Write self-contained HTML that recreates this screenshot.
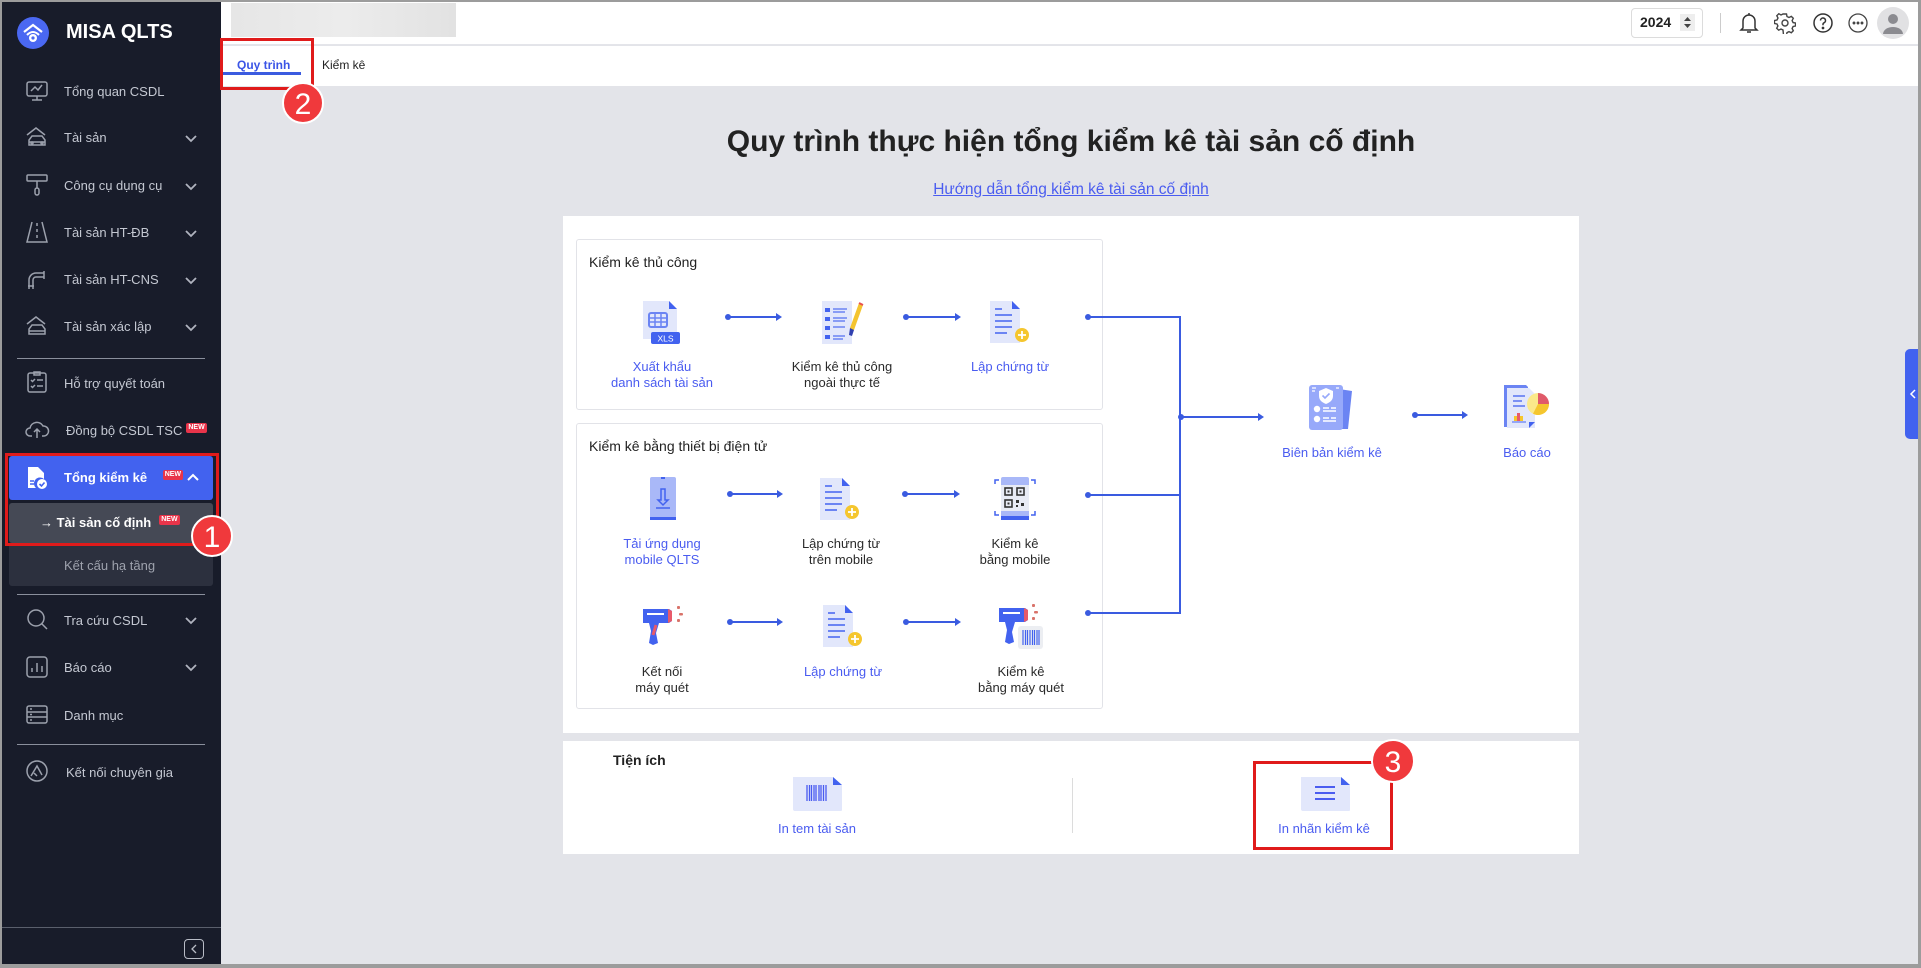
<!DOCTYPE html>
<html><head><meta charset="utf-8">
<style>
*{margin:0;padding:0;box-sizing:border-box}
body{width:1921px;height:968px;position:relative;overflow:hidden;background:#e3e4e9;font-family:"Liberation Sans","Noto Sans CJK SC",sans-serif}
.a{position:absolute}
#frame{position:absolute;inset:0;border:2px solid #9c9c9c;border-right-width:3px;border-bottom-width:4px;pointer-events:none;z-index:50}
#side{left:0;top:0;width:221px;height:968px;background:#181c2a}
.mi{position:absolute;left:64px;font-size:13px;color:#c4c8d2;white-space:nowrap}
.ic{position:absolute;left:24px;width:26px;height:26px}
.chev{position:absolute;left:184px;width:14px;height:14px}
.div{position:absolute;left:17px;width:188px;height:1px;background:#8a8f9c}
.new{display:inline-block;background:#e8344a;color:#fff;font-size:7px;font-weight:bold;padding:1px 2px;border-radius:2px;vertical-align:top;margin-left:4px;line-height:8px}
.lbl{position:absolute;font-size:13px;text-align:center;line-height:16px;white-space:nowrap;transform:translateX(-50%)}
.blue{color:#4a5cf0}.dark{color:#2a2a2a}
.arr{position:absolute;height:2px;background:#3a5be0}
.arr:before{content:"";position:absolute;left:-3px;top:-2px;width:6px;height:6px;border-radius:50%;background:#3a5be0}
.arr:after{content:"";position:absolute;right:-2px;top:-3px;border-left:6px solid #3a5be0;border-top:4px solid transparent;border-bottom:4px solid transparent}
.dot{position:absolute;height:2px;background:#3a5be0}
.dot:before{content:"";position:absolute;left:-3px;top:-2px;width:6px;height:6px;border-radius:50%;background:#3a5be0}
.circ{position:absolute;width:42px;height:42px;border-radius:50%;background:#f0393c;color:#fff;font-size:30px;text-align:center;line-height:42px;border:2px solid #fff;z-index:20}
.rbox{position:absolute;border:3px solid #e01b1b;z-index:19}
.card{position:absolute;border:1px solid #e2e3e8;border-radius:3px;background:#fff}
.ct{position:absolute;font-size:14px;color:#222;font-weight:500}
</style></head><body>
<div id="frame"></div>

<div id="side" class="a">
 <svg class="a" style="left:16px;top:16px" width="34" height="34" viewBox="0 0 34 34"><circle cx="17" cy="17" r="16" fill="#4a68f2"/><path d="M8 16 L17 9 L26 16" stroke="#fff" stroke-width="2.2" fill="none"/><path d="M11 19 Q17 13 23 19" stroke="#fff" stroke-width="2" fill="none"/><circle cx="17" cy="22" r="4" fill="#fff"/><circle cx="17" cy="22" r="1.6" fill="#4a68f2"/></svg>
 <div class="a" style="left:66px;top:21px;font-size:20px;font-weight:bold;color:#fff">MISA QLTS</div>

 <svg class="ic" style="top:78px" viewBox="0 0 26 26" fill="none" stroke="#9ca1ad" stroke-width="1.5"><rect x="3" y="4" width="20" height="14" rx="2"/><path d="M7 13l4-4 3 3 4-5M13 18v4M8 22h10"/></svg>
 <div class="mi" style="top:84px">Tổng quan CSDL</div>
 <svg class="ic" style="top:124px" viewBox="0 0 26 26" fill="none" stroke="#9ca1ad" stroke-width="1.5"><path d="M3 11l9-7 9 7M5 21v-5l3-4h10l3 4v5zM5 18h16"/><circle cx="8" cy="19" r="1"/><circle cx="18" cy="19" r="1"/></svg>
 <div class="mi" style="top:130px">Tài sản</div>
 <svg class="ic" style="top:172px" viewBox="0 0 26 26" fill="none" stroke="#9ca1ad" stroke-width="1.5"><rect x="3" y="3" width="20" height="6" rx="1"/><path d="M13 9v4M13 13v3"/><rect x="11" y="16" width="4" height="7" rx="2"/></svg>
 <div class="mi" style="top:178px">Công cụ dụng cụ</div>
 <svg class="ic" style="top:219px" viewBox="0 0 26 26" fill="none" stroke="#9ca1ad" stroke-width="1.5"><path d="M8 3L3 23h20L18 3M13 4v3M13 10v3M13 16v3"/></svg>
 <div class="mi" style="top:225px">Tài sản HT-ĐB</div>
 <svg class="ic" style="top:266px" viewBox="0 0 26 26" fill="none" stroke="#9ca1ad" stroke-width="1.5"><path d="M5 23v-9a7 7 0 0 1 7-7h8M9 23v-9a3 3 0 0 1 3-3h8M20 5v8M4 20h6"/></svg>
 <div class="mi" style="top:272px">Tài sản HT-CNS</div>
 <svg class="ic" style="top:313px" viewBox="0 0 26 26" fill="none" stroke="#9ca1ad" stroke-width="1.5"><path d="M3 11l9-7 9 7M5 21v-5l3-4h10l3 4v5zM5 18h16"/></svg>
 <div class="mi" style="top:319px">Tài sản xác lập</div>
 <svg class="chev" style="top:131px" viewBox="0 0 14 14"><path d="M2 5l5 5 5-5" stroke="#b0b4bf" stroke-width="1.8" fill="none"/></svg>
 <svg class="chev" style="top:179px" viewBox="0 0 14 14"><path d="M2 5l5 5 5-5" stroke="#b0b4bf" stroke-width="1.8" fill="none"/></svg>
 <svg class="chev" style="top:226px" viewBox="0 0 14 14"><path d="M2 5l5 5 5-5" stroke="#b0b4bf" stroke-width="1.8" fill="none"/></svg>
 <svg class="chev" style="top:273px" viewBox="0 0 14 14"><path d="M2 5l5 5 5-5" stroke="#b0b4bf" stroke-width="1.8" fill="none"/></svg>
 <svg class="chev" style="top:320px" viewBox="0 0 14 14"><path d="M2 5l5 5 5-5" stroke="#b0b4bf" stroke-width="1.8" fill="none"/></svg>
 <div class="div" style="top:358px"></div>
 <svg class="ic" style="top:369px" viewBox="0 0 26 26" fill="none" stroke="#9ca1ad" stroke-width="1.5"><rect x="4" y="4" width="18" height="19" rx="2"/><path d="M10 3h6v3h-6zM7 11l1.5 1.5L11 10M13 11h6M7 17l1.5 1.5L11 16M13 17h6"/></svg>
 <div class="mi" style="top:376px">Hỗ trợ quyết toán</div>
 <svg class="ic" style="top:416px" viewBox="0 0 26 26" fill="none" stroke="#9ca1ad" stroke-width="1.5"><path d="M8 20H6a4 4 0 0 1 0-8 7 7 0 0 1 13-2 5 5 0 0 1 1 10h-2M13 22v-9M10 16l3-3 3 3"/></svg>
 <div class="mi" style="top:423px;left:66px">Đồng bộ CSDL TSC<span class="new">NEW</span></div>

 <div class="a" style="left:9px;top:456px;width:204px;height:44px;background:#4262ef;border-radius:3px"></div>
 <svg class="ic" style="top:465px" viewBox="0 0 26 26"><path d="M4 2h10l6 6v6a6 6 0 0 0-8 9H4z" fill="#fff"/><circle cx="18" cy="19" r="5" fill="#fff"/><path d="M15.5 19l2 2 3-3.5" stroke="#4262ef" stroke-width="1.6" fill="none"/><path d="M6 16h4M6 19h4" stroke="#4262ef" stroke-width="1.4"/></svg>
 <div class="mi" style="top:470px;color:#fff;font-weight:bold">Tổng kiểm kê <span class="new" style="margin-left:12px">NEW</span></div>
 <svg class="chev" style="top:471px;left:186px" viewBox="0 0 14 14"><path d="M2 9l5-5 5 5" stroke="#fff" stroke-width="2" fill="none"/></svg>
 <div class="a" style="left:9px;top:503px;width:204px;height:40px;background:#454955;border-radius:3px"></div>
 <div class="mi" style="top:515px;left:40px;color:#fff;font-weight:bold">→ Tài sản cố định<span class="new" style="margin-left:8px">NEW</span></div>
 <div class="a" style="left:9px;top:543px;width:204px;height:43px;background:#2c303e;border-radius:0 0 3px 3px"></div>
 <div class="mi" style="top:558px;color:#9ea2ad">Kết cấu hạ tầng</div>
 <div class="div" style="top:594px"></div>

 <svg class="ic" style="top:606px" viewBox="0 0 26 26" fill="none" stroke="#9ca1ad" stroke-width="1.5"><circle cx="12" cy="12" r="8"/><path d="M18 18l5 5"/></svg>
 <div class="mi" style="top:613px">Tra cứu CSDL</div>
 <svg class="ic" style="top:654px" viewBox="0 0 26 26" fill="none" stroke="#9ca1ad" stroke-width="1.5"><rect x="3" y="3" width="20" height="20" rx="3"/><path d="M8 18v-4M13 18V9M18 18v-6"/></svg>
 <div class="mi" style="top:660px">Báo cáo</div>
 <svg class="chev" style="top:613px" viewBox="0 0 14 14"><path d="M2 5l5 5 5-5" stroke="#b0b4bf" stroke-width="1.8" fill="none"/></svg>
 <svg class="chev" style="top:660px" viewBox="0 0 14 14"><path d="M2 5l5 5 5-5" stroke="#b0b4bf" stroke-width="1.8" fill="none"/></svg>
 <svg class="ic" style="top:702px" viewBox="0 0 26 26" fill="none" stroke="#9ca1ad" stroke-width="1.5"><rect x="3" y="4" width="20" height="17" rx="2"/><path d="M3 10h20M3 15h20M6 7h2M6 12.5h2M6 18h2"/></svg>
 <div class="mi" style="top:708px">Danh mục</div>
 <div class="div" style="top:744px"></div>
 <svg class="ic" style="top:758px" viewBox="0 0 26 26" fill="none" stroke="#9ca1ad" stroke-width="1.5"><circle cx="13" cy="13" r="10"/><path d="M7 18l6-10 5 9M10 15l3 3"/></svg>
 <div class="mi" style="top:765px;left:66px">Kết nối chuyên gia</div>

 <div class="a" style="left:0;top:927px;width:221px;height:1px;background:#5a5f6c"></div>
 <div class="a" style="left:184px;top:939px;width:20px;height:20px;border:1.5px solid #b8bcc6;border-radius:4px"></div>
 <svg class="a" style="left:189px;top:944px" width="10" height="10" viewBox="0 0 10 10"><path d="M7 1L3 5l4 4" stroke="#b8bcc6" stroke-width="1.3" fill="none"/></svg>
</div>

<div class="a" style="left:221px;top:0;width:1700px;height:45px;background:#fff;border-bottom:1px solid #e4e5ea"></div>
<div class="a" style="left:231px;top:3px;width:225px;height:34px;background:linear-gradient(90deg,#e6e6e6,#ececec 50%,#e2e2e2)"></div>
<div class="a" style="left:1631px;top:8px;width:72px;height:30px;border:1px solid #dcdcdc;border-radius:4px;background:#fff"></div>
<div class="a" style="left:1640px;top:14px;font-size:14px;font-weight:bold;color:#222">2024</div>
<div class="a" style="left:1680px;top:14px;width:15px;height:17px;background:#eee"></div>
<svg class="a" style="left:1682px;top:15px" width="11" height="15" viewBox="0 0 11 15"><path d="M2 6l3.5-4 3.5 4zM2 9l3.5 4 3.5-4z" fill="#444"/></svg>
<div class="a" style="left:1720px;top:13px;width:1px;height:20px;background:#ccc"></div>
<svg class="a" style="left:1738px;top:11px" width="22" height="24" viewBox="0 0 22 24" fill="none" stroke="#333" stroke-width="1.5"><path d="M5 17V10a6 6 0 0 1 12 0v7l2 2H3zM9 21h4M11 2v2"/></svg>
<svg class="a" style="left:1774px;top:12px" width="22" height="22" viewBox="0 0 22 22" fill="none" stroke="#444" stroke-width="1.4"><circle cx="11" cy="11" r="3"/><path d="M9.5 2h3l.5 2.5 2 1 2.3-1.2 2 2-1.2 2.3 1 2 2.4.4v3l-2.4.5-1 2 1.2 2.3-2 2-2.3-1.2-2 1-.5 2.4h-3L9 18l-2-1-2.3 1.2-2-2L3.9 14 3 12l-2.5-.5v-3L3 8l1-2-1.2-2.3 2-2L7 3l2-1z"/></svg>
<svg class="a" style="left:1812px;top:12px" width="22" height="22" viewBox="0 0 22 22" fill="none" stroke="#333" stroke-width="1.5"><circle cx="11" cy="11" r="9"/><path d="M8.5 8.5a2.5 2.5 0 1 1 3.5 2.3c-.7.3-1 .8-1 1.5v1"/><circle cx="11" cy="16" r=".6" fill="#333"/></svg>
<svg class="a" style="left:1847px;top:12px" width="22" height="22" viewBox="0 0 22 22" fill="none" stroke="#444" stroke-width="1.3"><circle cx="11" cy="11" r="9"/><circle cx="7" cy="11" r=".8" fill="#444"/><circle cx="11" cy="11" r=".8" fill="#444"/><circle cx="15" cy="11" r=".8" fill="#444"/></svg>
<svg class="a" style="left:1877px;top:7px" width="32" height="32" viewBox="0 0 32 32"><circle cx="16" cy="16" r="16" fill="#e1e1e3"/><circle cx="16" cy="12" r="5" fill="#8b8b90"/><path d="M6 27a10 7 0 0 1 20 0z" fill="#8b8b90"/></svg>

<div class="a" style="left:221px;top:46px;width:1700px;height:40px;background:#fff"></div>
<div class="a" style="left:237px;top:58px;font-size:12px;font-weight:bold;color:#3b55e6">Quy trình</div>
<div class="a" style="left:223px;top:72px;width:78px;height:3px;background:#3b5be0"></div>
<div class="a" style="left:322px;top:58px;font-size:12px;color:#222">Kiểm kê</div>
<div class="rbox" style="left:220px;top:38px;width:94px;height:52px"></div>
<div class="circ" style="left:282px;top:82px">2</div>
<div class="rbox" style="left:5px;top:453px;width:214px;height:93px"></div>
<div class="circ" style="left:191px;top:515px">1</div>

<div class="a" style="left:1905px;top:349px;width:16px;height:90px;background:#4262ef;border-radius:5px 0 0 5px"></div>
<svg class="a" style="left:1909px;top:389px" width="8" height="10" viewBox="0 0 8 10"><path d="M6 1L2 5l4 4" stroke="#fff" stroke-width="1.5" fill="none"/></svg>

<div class="a" style="left:563px;top:125px;width:1016px;text-align:center;font-size:30px;font-weight:bold;color:#222">Quy trình thực hiện tổng kiểm kê tài sản cố định</div>
<div class="a" style="left:563px;top:181px;width:1016px;text-align:center;font-size:15.5px;color:#4a5cf0;text-decoration:underline">Hướng dẫn tổng kiểm kê tài sản cố định</div>

<div class="a" style="left:563px;top:216px;width:1016px;height:517px;background:#fff"></div>
<div class="card" style="left:576px;top:239px;width:527px;height:171px"></div>
<div class="card" style="left:576px;top:423px;width:527px;height:286px"></div>
<div class="ct" style="left:589px;top:254px">Kiểm kê thủ công</div>
<div class="ct" style="left:589px;top:438px">Kiểm kê bằng thiết bị điện tử</div>

<svg class="a" style="left:640px;top:300px" width="44" height="46" viewBox="0 0 44 46"><path d="M3 1h26l8 8v30H3z" fill="#e2e7fb"/><path d="M29 1l8 8h-8z" fill="#4262ef"/><rect x="9" y="13" width="18" height="14" rx="2" fill="none" stroke="#6b84f3" stroke-width="2"/><path d="M9 18h18M9 22h18M15 13v14M21 13v14" stroke="#6b84f3" stroke-width="1.5"/><rect x="11" y="32" width="29" height="12" rx="2" fill="#4262ef"/><text x="25.5" y="41.5" font-size="8.5" fill="#fff" text-anchor="middle" font-family="Liberation Sans">XLS</text></svg>
<div class="lbl blue" style="left:662px;top:359px">Xuất khẩu<br>danh sách tài sản</div>

<svg class="a" style="left:820px;top:300px" width="46" height="46" viewBox="0 0 46 46"><rect x="2" y="1" width="30" height="43" fill="#e2e7fb"/><g fill="#4262ef"><rect x="5" y="8" width="5" height="4"/><rect x="5" y="17" width="5" height="4"/><rect x="5" y="26" width="5" height="4"/><rect x="5" y="35" width="5" height="4"/></g><g stroke="#6b84f3" stroke-width="1.5"><path d="M13 9h14M13 12h12M13 18h14M13 21h12M13 27h12M13 36h12M13 39h10"/></g><path d="M39 3l4 2-9 25-4 2 0-4z" fill="#f4c430"/><path d="M30 28l4 2-2 6-3-1z" fill="#3040b0"/><path d="M39 3l4 2" stroke="#e85050" stroke-width="2"/></svg>
<div class="lbl dark" style="left:842px;top:359px">Kiểm kê thủ công<br>ngoài thực tế</div>

<svg class="a" style="left:988px;top:300px" width="44" height="46" viewBox="0 0 44 46"><path d="M2 1h22l8 8v34H2z" fill="#e2e7fb"/><path d="M24 1l8 8h-8z" fill="#4262ef"/><path d="M7 9h7M7 15h17M7 21h17M7 27h17M7 33h12" stroke="#6b84f3" stroke-width="2"/><circle cx="34" cy="35" r="7" fill="#f5c62e"/><path d="M34 31v8M30 35h8" stroke="#fff" stroke-width="1.8"/></svg>
<div class="lbl blue" style="left:1010px;top:359px">Lập chứng từ</div>

<div class="arr" style="left:728px;top:316px;width:52px"></div>
<div class="arr" style="left:906px;top:316px;width:53px"></div>
<div class="dot" style="left:1088px;top:316px;width:92px"></div>

<svg class="a" style="left:645px;top:476px" width="34" height="46" viewBox="0 0 34 46"><rect x="5" y="1" width="26" height="43" rx="2" fill="#a9b8f8"/><rect x="5" y="41" width="26" height="3" fill="#4262ef"/><rect x="16" y="1" width="4" height="2" fill="#4262ef"/><path d="M16 13v11h-3l5 5 5-5h-3V13z" fill="none" stroke="#4262ef" stroke-width="1.5"/><path d="M11 32h14" stroke="#4262ef" stroke-width="1.5"/></svg>
<div class="lbl blue" style="left:662px;top:536px">Tải ứng dụng<br>mobile QLTS</div>

<svg class="a" style="left:818px;top:477px" width="44" height="46" viewBox="0 0 44 46"><path d="M2 1h22l8 8v34H2z" fill="#e2e7fb"/><path d="M24 1l8 8h-8z" fill="#4262ef"/><path d="M7 9h7M7 15h17M7 21h17M7 27h17M7 33h12" stroke="#6b84f3" stroke-width="2"/><circle cx="34" cy="35" r="7" fill="#f5c62e"/><path d="M34 31v8M30 35h8" stroke="#fff" stroke-width="1.8"/></svg>
<div class="lbl dark" style="left:841px;top:536px">Lập chứng từ<br>trên mobile</div>

<svg class="a" style="left:993px;top:476px" width="44" height="46" viewBox="0 0 44 46"><rect x="8" y="1" width="28" height="43" rx="2" fill="#a9b8f8"/><rect x="8" y="40" width="28" height="4" fill="#4262ef"/><rect x="8" y="9" width="28" height="26" fill="#e8ebf5"/><path d="M2 8V4h4M42 8V4h-4M2 35v4h4M42 35v4h-4" stroke="#4262ef" stroke-width="1.5" fill="none"/><g fill="none" stroke="#333" stroke-width="1.6"><rect x="12" y="12" width="7" height="7"/><rect x="24" y="12" width="7" height="7"/><rect x="12" y="24" width="7" height="7"/></g><g fill="#333"><rect x="14.5" y="14.5" width="2" height="2"/><rect x="26.5" y="14.5" width="2" height="2"/><rect x="14.5" y="26.5" width="2" height="2"/><rect x="23" y="24" width="3" height="3"/><rect x="28" y="27" width="3" height="3"/><rect x="23" y="29" width="2" height="2"/></g></svg>
<div class="lbl dark" style="left:1015px;top:536px">Kiểm kê<br>bằng mobile</div>

<div class="arr" style="left:730px;top:493px;width:51px"></div>
<div class="arr" style="left:905px;top:493px;width:53px"></div>
<div class="dot" style="left:1088px;top:494px;width:92px"></div>

<svg class="a" style="left:640px;top:603px" width="46" height="46" viewBox="0 0 46 46"><path d="M3 6h26l3 2v10l-3 2H19l-3 10 2 10-5 2-4-2 2-12-2-8H3z" fill="#4262ef"/><path d="M28 6l4 2v10l-4 2z" fill="#e85a6a"/><path d="M7 11h17" stroke="#fff" stroke-width="2"/><path d="M16 22l-3 10" stroke="#e85a6a" stroke-width="3"/><g fill="#d9736a"><rect x="37" y="3" width="3" height="3" rx="1"/><rect x="39" y="10" width="4" height="2.5" rx="1"/><rect x="37" y="16" width="3" height="3" rx="1"/></g></svg>
<div class="lbl dark" style="left:662px;top:664px">Kết nối<br>máy quét</div>

<svg class="a" style="left:821px;top:604px" width="44" height="46" viewBox="0 0 44 46"><path d="M2 1h22l8 8v34H2z" fill="#e2e7fb"/><path d="M24 1l8 8h-8z" fill="#4262ef"/><path d="M7 9h7M7 15h17M7 21h17M7 27h17M7 33h12" stroke="#6b84f3" stroke-width="2"/><circle cx="34" cy="35" r="7" fill="#f5c62e"/><path d="M34 31v8M30 35h8" stroke="#fff" stroke-width="1.8"/></svg>
<div class="lbl blue" style="left:843px;top:664px">Lập chứng từ</div>

<svg class="a" style="left:996px;top:602px" width="50" height="50" viewBox="0 0 50 50"><path d="M3 6h26l3 2v10l-3 2H19l-3 10 2 10-5 2-4-2 2-12-2-8H3z" fill="#4262ef"/><path d="M28 6l4 2v10l-4 2z" fill="#e85a6a"/><path d="M7 11h17" stroke="#fff" stroke-width="2"/><g fill="#d9736a"><rect x="36" y="2" width="3" height="3" rx="1"/><rect x="38" y="9" width="4" height="2.5" rx="1"/><rect x="36" y="15" width="3" height="3" rx="1"/></g><rect x="22" y="24" width="25" height="23" rx="3" fill="#eceef2"/><g stroke="#4262ef" stroke-width="1.2"><path d="M27 28v15M29.5 28v15M31.5 28v15M34 28v15M36.5 28v15M38.5 28v15M41 28v15M43 28v15"/></g></svg>
<div class="lbl dark" style="left:1021px;top:664px">Kiểm kê<br>bằng máy quét</div>

<div class="arr" style="left:730px;top:621px;width:51px"></div>
<div class="arr" style="left:906px;top:621px;width:53px"></div>
<div class="dot" style="left:1088px;top:612px;width:92px"></div>

<div class="a" style="left:1179px;top:316px;width:2px;height:298px;background:#3a5be0"></div>
<div class="arr" style="left:1181px;top:416px;width:81px"></div>

<svg class="a" style="left:1309px;top:385px" width="46" height="46" viewBox="0 0 46 46"><path d="M30 4l13 2-4 38-9 0z" fill="#6b84f3"/><rect x="0" y="0" width="34" height="45" rx="3" fill="#97a9fa"/><path d="M3 3h4M3 6h3M27 3h3" stroke="#fff" stroke-width="1.3"/><path d="M17 3l7 3v5c0 4-3 6.5-7 8-4-1.5-7-4-7-8V6z" fill="#fff"/><path d="M13.5 10.5l2.5 2.5 4.5-4.5" stroke="#97a9fa" stroke-width="1.6" fill="none"/><circle cx="8" cy="24" r="3.2" fill="#fff"/><circle cx="8" cy="34" r="3.2" fill="#fff"/><path d="M14 23h6M22 23h5M14 26h13M14 33h6M22 33h5M14 36h13" stroke="#fff" stroke-width="1.4"/></svg>
<div class="lbl blue" style="left:1332px;top:445px">Biên bản kiểm kê</div>

<div class="arr" style="left:1415px;top:414px;width:51px"></div>

<svg class="a" style="left:1503px;top:384px" width="48" height="46" viewBox="0 0 48 46"><path d="M1 1h22l2 2v40H1z" fill="#6b84f3"/><path d="M4 4h22l6 6v34H4z" fill="#e2e7fb"/><path d="M26 38l6 0-6 6z" fill="#4262ef"/><path d="M10 12h12M10 17h9M10 22h12" stroke="#6b84f3" stroke-width="1.8"/><rect x="14" y="29" width="3" height="8" fill="#e85a6a"/><rect x="11" y="32" width="3" height="5" fill="#f5c62e"/><rect x="17" y="32" width="3" height="5" fill="#f5c62e"/><path d="M9 38h14" stroke="#6b84f3" stroke-width="1.3"/><circle cx="35" cy="20" r="11" fill="#fbe98a"/><path d="M35 20V9a11 11 0 0 1 11 11z" fill="#e05a6a"/><path d="M35 20h11a11 11 0 0 1-16 9.8z" fill="#f5c62e"/></svg>
<div class="lbl blue" style="left:1527px;top:445px">Báo cáo</div>

<div class="a" style="left:563px;top:741px;width:1016px;height:113px;background:#fff"></div>
<div class="a" style="left:613px;top:752px;font-size:14px;font-weight:bold;color:#222">Tiện ích</div>
<svg class="a" style="left:793px;top:777px" width="50" height="34" viewBox="0 0 50 34"><path d="M0 0h40l9 8v25a1 1 0 0 1-1 1H2a2 2 0 0 1-2-2z" fill="#e2e7fb"/><path d="M40 0l9 8h-9z" fill="#4262ef"/><g stroke="#4a5cf0" stroke-width="1.3"><path d="M14 8v16M16.5 8v16M18.5 8v16M21 8v16M23 8v16M26 8v16M28 8v16M30.5 8v16M33 8v16"/></g></svg>
<div class="lbl blue" style="left:817px;top:821px">In tem tài sản</div>
<div class="a" style="left:1072px;top:778px;width:1px;height:55px;background:#dcdcdc"></div>
<svg class="a" style="left:1301px;top:777px" width="50" height="34" viewBox="0 0 50 34"><path d="M0 0h40l9 8v25a1 1 0 0 1-1 1H2a2 2 0 0 1-2-2z" fill="#e2e7fb"/><path d="M40 0l9 8h-9z" fill="#4262ef"/><path d="M14 10h20M14 16h20M14 22h20" stroke="#4a5cf0" stroke-width="2"/></svg>
<div class="lbl blue" style="left:1324px;top:821px">In nhãn kiểm kê</div>
<div class="rbox" style="left:1253px;top:761px;width:140px;height:89px"></div>
<div class="circ" style="left:1371px;top:739px;width:44px;height:44px;line-height:44px">3</div>
</body></html>
